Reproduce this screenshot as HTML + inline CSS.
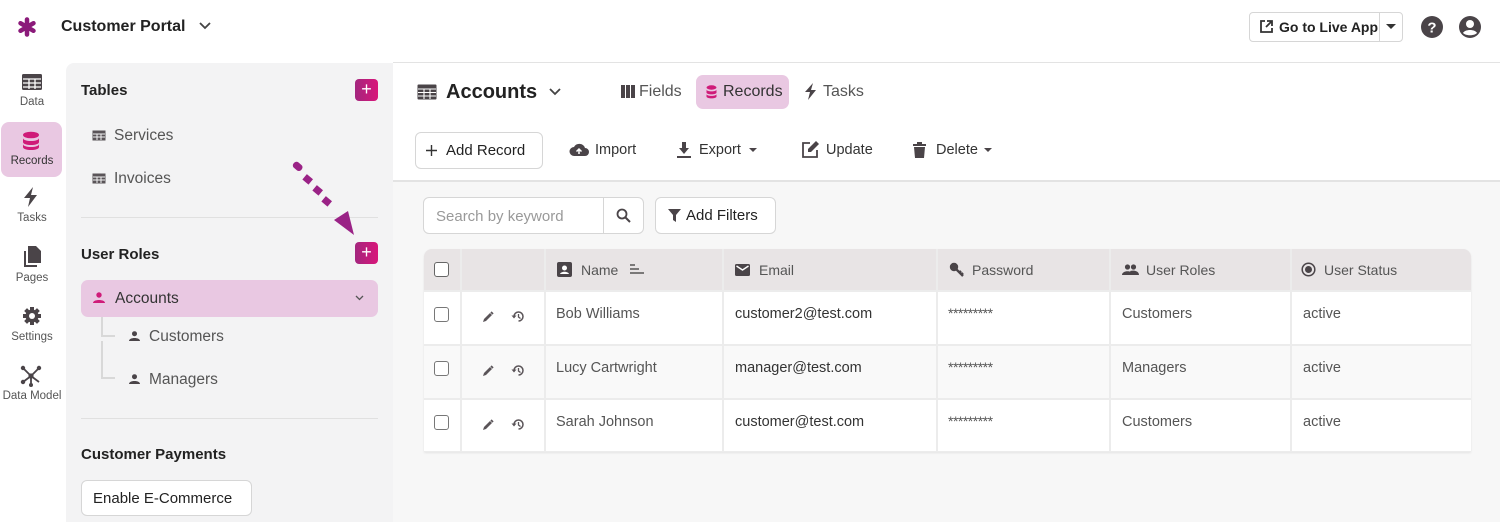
<!DOCTYPE html>
<html><head><meta charset="utf-8"><style>
*{box-sizing:border-box;margin:0;padding:0}
body{width:1500px;height:522px;overflow:hidden;background:#fff;font-family:"Liberation Sans",Arial,sans-serif;color:#333;position:relative}
.a{position:absolute}
.t{position:absolute;white-space:nowrap}
.rl{position:absolute;left:0;width:64px;text-align:center;font-size:11.5px;color:#555}
.btn{position:absolute;border:1px solid #d6d6d6;border-radius:6px;background:#fff}
.plus{position:absolute;width:23px;height:22px;border-radius:4px;background:linear-gradient(90deg,#a3267e,#d9167a);color:#fff;font-size:18px;line-height:21px;text-align:center}
.th{position:absolute;top:249px;height:41px;background:#e8e4e5;font-size:14px;color:#555;line-height:41px}
.cell{position:absolute;font-size:14.5px;color:#555}
</style></head><body>
<!-- top bar -->
<svg class="a" style="left:17px;top:17px" width="20" height="20" viewBox="0 0 20 20"><g stroke="#8b1a7a" stroke-width="4.5" stroke-linecap="round"><path d="M10 2.5v15M3.5 6.2l13 7.6M3.5 13.8l13-7.6"/></g></svg>
<div class="t" style="left:61px;top:18px;font-size:16px;font-weight:bold;color:#222">Customer Portal</div>
<svg class="a" style="left:198px;top:20px" width="14" height="12"><path d="M2 3l5 5 5-5" stroke="#444" stroke-width="1.8" fill="none"/></svg>
<div class="btn" style="left:1249px;top:12px;width:154px;height:30px;border-radius:4px"></div>
<div class="a" style="left:1379px;top:12px;width:1px;height:30px;background:#d6d6d6"></div>
<svg class="a" style="left:1259px;top:19px" width="15" height="15"><path d="M6 2H2v11h11V9M8 2h5v5M13 2L7 8" stroke="#333" stroke-width="1.8" fill="none"/></svg>
<div class="t" style="left:1279px;top:19px;font-size:14px;font-weight:bold;color:#222">Go to Live App</div>
<svg class="a" style="left:1385px;top:23px" width="12" height="8"><path d="M1 1h10L6 6z" fill="#333"/></svg>
<svg class="a" style="left:1420px;top:15px" width="24" height="24"><circle cx="12" cy="12" r="11" fill="#4a4448"/><text x="12" y="17.5" text-anchor="middle" font-size="15" font-weight="bold" fill="#fff" font-family="Liberation Sans">?</text></svg>
<svg class="a" style="left:1458px;top:15px" width="24" height="24"><circle cx="12" cy="12" r="11" fill="#4a4448"/><circle cx="12" cy="9" r="4" fill="#fff"/><path d="M5 18c2-4 12-4 14 0c-3 3-11 3-14 0z" fill="#fff"/></svg>
<div class="a" style="left:393px;top:62px;width:1107px;height:1px;background:#e3e3e3"></div>

<!-- rail -->
<svg class="a" style="left:21px;top:73px" width="22" height="18"><rect x="1" y="1" width="20" height="16" rx="1.5" fill="#4a4448"/><path d="M2 6h18M2 10h18M2 14h18M8 6v10M14 6v10" stroke="#fff" stroke-width="1.3"/></svg>
<div class="rl" style="top:96px">Data</div>
<div class="a" style="left:1px;top:122px;width:61px;height:55px;background:#e9c8e2;border-radius:8px"></div>
<svg class="a" style="left:22px;top:131px" width="18" height="20"><ellipse cx="9" cy="4" rx="8" ry="3.3" fill="#cf1b79"/><path d="M1 7c0 4 16 4 16 0v4c0 4-16 4-16 0zM1 13c0 4 16 4 16 0v3c0 4-16 4-16 0z" fill="#cf1b79"/></svg>
<div class="rl" style="top:155px;color:#333">Records</div>
<svg class="a" style="left:23px;top:187px" width="16" height="20"><path d="M10 0L1 11h6l-2 9 9-12H8z" fill="#4a4448"/></svg>
<div class="rl" style="top:212px">Tasks</div>
<svg class="a" style="left:22px;top:246px" width="20" height="22"><path d="M6 0h8l5 5v12H6z" fill="#4a4448"/><path d="M2 5h2v14h11v2H2z" fill="#4a4448"/></svg>
<div class="rl" style="top:272px">Pages</div>
<svg class="a" style="left:22px;top:306px" width="20" height="20" viewBox="0 0 20 20"><g fill="#4a4448"><circle cx="10" cy="10" r="6.5"/><g stroke="#4a4448" stroke-width="4"><path d="M10 1v18M1 10h18M3.6 3.6l12.8 12.8M16.4 3.6L3.6 16.4"/></g></g><circle cx="10" cy="10" r="3" fill="#fff"/></svg>
<div class="rl" style="top:331px">Settings</div>
<svg class="a" style="left:20px;top:365px" width="22" height="22"><path d="M3 3l8 8 8-8M3 17l8-6M11 11v9M11 11l8 6" stroke="#4a4448" stroke-width="1.8" fill="none"/><circle cx="3" cy="3" r="2.2" fill="#4a4448"/><circle cx="19" cy="3" r="2.2" fill="#4a4448"/><circle cx="3" cy="17" r="2.2" fill="#4a4448"/><circle cx="11" cy="11" r="2.6" fill="#4a4448"/><circle cx="11" cy="20" r="2" fill="#4a4448"/></svg>
<div class="rl" style="top:390px;font-size:11.5px">Data Model</div>

<!-- sidebar -->
<div class="a" style="left:66px;top:63px;width:327px;height:459px;background:#f3f3f4;border-top-left-radius:8px"></div>
<div class="t" style="left:81px;top:82px;font-size:15px;font-weight:bold;color:#222">Tables</div>
<div class="plus" style="left:355px;top:79px">+</div>
<svg class="a" style="left:92px;top:130px" width="14" height="11"><rect x="0.5" y="0.5" width="13" height="10" fill="#5a5458"/><path d="M1 4h12M1 7h12M5 4v6M9 4v6" stroke="#f3f3f4" stroke-width="1"/></svg>
<div class="t" style="left:114px;top:127px;font-size:15.5px;color:#555">Services</div>
<svg class="a" style="left:92px;top:173px" width="14" height="11"><rect x="0.5" y="0.5" width="13" height="10" fill="#5a5458"/><path d="M1 4h12M1 7h12M5 4v6M9 4v6" stroke="#f3f3f4" stroke-width="1"/></svg>
<div class="t" style="left:114px;top:170px;font-size:15.5px;color:#555">Invoices</div>
<div class="a" style="left:81px;top:217px;width:297px;height:1px;background:#e0e0e0"></div>
<svg class="a" style="left:290px;top:160px" width="70" height="80"><g fill="#9a2286"><rect x="3" y="3" width="10" height="7" rx="3" transform="rotate(40 8 6)"/><rect x="14" y="16" width="8" height="7" transform="rotate(40 18 19)"/><rect x="24" y="27" width="8" height="7" transform="rotate(40 28 30)"/><rect x="33" y="38" width="8" height="7" transform="rotate(40 37 41)"/><path d="M44 64l20 15-6-24z" transform="translate(0,-4)"/></g></svg>
<div class="t" style="left:81px;top:246px;font-size:15px;font-weight:bold;color:#222">User Roles</div>
<div class="plus" style="left:355px;top:242px">+</div>
<div class="a" style="left:81px;top:280px;width:297px;height:37px;background:#e9c8e2;border-radius:7px"></div>
<svg class="a" style="left:93px;top:292px" width="12" height="11"><circle cx="6" cy="3" r="2.7" fill="#cf1b79"/><path d="M0 11c0-4 12-4 12 0z" fill="#cf1b79"/></svg>
<div class="t" style="left:115px;top:290px;font-size:15.5px;color:#333">Accounts</div>
<svg class="a" style="left:355px;top:295px" width="9" height="6"><path d="M1 1l3.5 3.5L8 1" stroke="#555" stroke-width="1.3" fill="none"/></svg>
<div class="a" style="left:101px;top:317px;width:2px;height:20px;background:#d8d8d8"></div>
<div class="a" style="left:101px;top:335px;width:14px;height:2px;background:#d8d8d8"></div>
<div class="a" style="left:101px;top:341px;width:2px;height:38px;background:#d8d8d8"></div>
<div class="a" style="left:101px;top:377px;width:14px;height:2px;background:#d8d8d8"></div>
<svg class="a" style="left:129px;top:331px" width="11" height="10"><circle cx="5.5" cy="2.7" r="2.5" fill="#4a4448"/><path d="M0 10c0-4 11-4 11 0z" fill="#4a4448"/></svg>
<div class="t" style="left:149px;top:328px;font-size:15.5px;color:#555">Customers</div>
<svg class="a" style="left:129px;top:374px" width="11" height="10"><circle cx="5.5" cy="2.7" r="2.5" fill="#4a4448"/><path d="M0 10c0-4 11-4 11 0z" fill="#4a4448"/></svg>
<div class="t" style="left:149px;top:371px;font-size:15.5px;color:#555">Managers</div>
<div class="a" style="left:81px;top:418px;width:297px;height:1px;background:#e0e0e0"></div>
<div class="t" style="left:81px;top:446px;font-size:15px;font-weight:bold;color:#222">Customer Payments</div>
<div class="btn" style="left:81px;top:480px;width:171px;height:36px"></div>
<div class="t" style="left:93px;top:490px;font-size:15px;color:#222">Enable E-Commerce</div>

<!-- main header -->
<svg class="a" style="left:417px;top:84px" width="20" height="16"><rect x="0.5" y="0.5" width="19" height="15" rx="1" fill="#4a4448"/><path d="M1 5h18M1 8.5h18M1 12h18M7 5v10M13 5v10" stroke="#fff" stroke-width="1.1"/></svg>
<div class="t" style="left:446px;top:81px;font-size:20px;font-weight:bold;color:#222">Accounts</div>
<svg class="a" style="left:548px;top:87px" width="14" height="10"><path d="M2 2l5 5 5-5" stroke="#444" stroke-width="1.8" fill="none"/></svg>
<svg class="a" style="left:621px;top:85px" width="14" height="13"><rect x="0" y="0" width="4" height="13" fill="#4a4448"/><rect x="5" y="0" width="4" height="13" fill="#4a4448"/><rect x="10" y="0" width="4" height="13" fill="#4a4448"/></svg>
<div class="t" style="left:639px;top:83px;font-size:16px;color:#555">Fields</div>
<div class="a" style="left:696px;top:75px;width:93px;height:34px;background:#e9c8e2;border-radius:7px"></div>
<svg class="a" style="left:706px;top:85px" width="11" height="14"><ellipse cx="5.5" cy="2.5" rx="5" ry="2.2" fill="#cf1b79"/><path d="M.5 4.5c0 2.5 10 2.5 10 0v3c0 2.5-10 2.5-10 0zM.5 9c0 2.5 10 2.5 10 0v2.5c0 2.5-10 2.5-10 0z" fill="#cf1b79"/></svg>
<div class="t" style="left:723px;top:83px;font-size:16px;color:#333">Records</div>
<svg class="a" style="left:804px;top:83px" width="14" height="17"><path d="M9 0L1 9h5l-2 8 8-10H7z" fill="#4a4448"/></svg>
<div class="t" style="left:823px;top:83px;font-size:16px;color:#555">Tasks</div>

<div class="btn" style="left:415px;top:132px;width:128px;height:37px"></div>
<svg class="a" style="left:426px;top:145px" width="11" height="11"><path d="M5.5 0v11M0 5.5h11" stroke="#333" stroke-width="1.4"/></svg>
<div class="t" style="left:446px;top:142px;font-size:15px;color:#222">Add Record</div>
<svg class="a" style="left:569px;top:142px" width="20" height="15"><path d="M5 14h11a4 4 0 000-8 6 6 0 00-11-1A4.5 4.5 0 005 14z" fill="#4a4448"/><path d="M10 12V7M7.5 9.5L10 7l2.5 2.5" stroke="#fff" stroke-width="1.5" fill="none"/></svg>
<div class="t" style="left:595px;top:142px;font-size:14.5px;color:#333">Import</div>
<svg class="a" style="left:677px;top:142px" width="14" height="16"><path d="M5 0h4v6h3l-5 6-5-6h3z" fill="#4a4448"/><rect x="0" y="14" width="14" height="2" fill="#4a4448"/></svg>
<div class="t" style="left:699px;top:142px;font-size:14.5px;color:#333">Export</div>
<svg class="a" style="left:748px;top:147px" width="10" height="6"><path d="M1 1h8L5 5z" fill="#4a4448"/></svg>
<svg class="a" style="left:801px;top:140px" width="19" height="19"><path d="M9 3H2v14h14V10" stroke="#4a4448" stroke-width="1.8" fill="none"/><path d="M15 1l3 3-8 8H7V9z" fill="#4a4448"/></svg>
<div class="t" style="left:826px;top:142px;font-size:14.5px;color:#333">Update</div>
<svg class="a" style="left:913px;top:142px" width="13" height="16"><rect x="0" y="2" width="13" height="2" fill="#4a4448"/><rect x="4" y="0" width="5" height="2" fill="#4a4448"/><path d="M1 5h11l-1 11H2z" fill="#4a4448"/></svg>
<div class="t" style="left:936px;top:142px;font-size:14.5px;color:#333">Delete</div>
<svg class="a" style="left:983px;top:147px" width="10" height="6"><path d="M1 1h8L5 5z" fill="#4a4448"/></svg>

<!-- content area -->
<div class="a" style="left:393px;top:180px;width:1107px;height:342px;background:#f7f7f7;border-top:2px solid #e3e3e3"></div>
<div class="btn" style="left:423px;top:197px;width:221px;height:37px"></div>
<div class="a" style="left:603px;top:197px;width:1px;height:37px;background:#d6d6d6"></div>
<div class="t" style="left:436px;top:208px;font-size:15px;color:#999">Search by keyword</div>
<svg class="a" style="left:616px;top:208px" width="15" height="15"><circle cx="6" cy="6" r="4.5" stroke="#4a4448" stroke-width="1.8" fill="none"/><path d="M9.5 9.5L14 14" stroke="#4a4448" stroke-width="2"/></svg>
<div class="btn" style="left:655px;top:197px;width:121px;height:37px"></div>
<svg class="a" style="left:668px;top:209px" width="13" height="13"><path d="M0 0h13L8 6v7L5 11V6z" fill="#4a4448"/></svg>
<div class="t" style="left:686px;top:207px;font-size:15px;color:#222">Add Filters</div>

<!-- table -->
<div class="a" style="left:424px;top:249px;width:1047px;height:203px;background:#ececec;border-radius:8px 8px 0 0;box-shadow:0 1px 2px rgba(0,0,0,.08)"></div>
<div class="th" style="left:424px;width:36px;border-top-left-radius:8px"></div>
<div class="th" style="left:462px;width:82px"></div>
<div class="th" style="left:546px;width:176px"></div>
<div class="th" style="left:724px;width:212px"></div>
<div class="th" style="left:938px;width:171px"></div>
<div class="th" style="left:1111px;width:179px"></div>
<div class="th" style="left:1292px;width:179px;border-top-right-radius:8px"></div>
<div class="a" style="left:434px;top:262px;width:15px;height:15px;border:1.5px solid #666;border-radius:3px;background:#fff"></div>
<svg class="a" style="left:557px;top:262px" width="15" height="15"><rect width="15" height="15" rx="2" fill="#4a4448"/><circle cx="7.5" cy="6" r="2.5" fill="#fff"/><path d="M3 12c1-3 8-3 9 0z" fill="#fff"/></svg>
<div class="t" style="left:581px;top:262px;font-size:14px;color:#555">Name</div>
<svg class="a" style="left:630px;top:263px" width="14" height="12"><path d="M0 2h5M0 6h9M0 10h14" stroke="#555" stroke-width="1.5"/></svg>
<svg class="a" style="left:735px;top:264px" width="15" height="12"><rect width="15" height="12" rx="1.5" fill="#4a4448"/><path d="M1.5 2l6 4 6-4" stroke="#fff" stroke-width="1.4" fill="none"/></svg>
<div class="t" style="left:759px;top:262px;font-size:14px;color:#555">Email</div>
<svg class="a" style="left:949px;top:262px" width="15" height="15"><circle cx="5" cy="5" r="4.2" fill="#4a4448"/><path d="M7 7l7 7M10 11l2-2M12 13l2-2" stroke="#4a4448" stroke-width="2.3"/></svg>
<div class="t" style="left:972px;top:262px;font-size:14px;color:#555">Password</div>
<svg class="a" style="left:1122px;top:264px" width="17" height="11"><circle cx="5.5" cy="3" r="2.6" fill="#4a4448"/><circle cx="11.5" cy="3" r="2.6" fill="#4a4448"/><path d="M0 11c0-5 11-5 11 0zM9 11c0-2 0-3-1-4 4-1 9 0 9 4z" fill="#4a4448"/></svg>
<div class="t" style="left:1146px;top:262px;font-size:14px;color:#555">User Roles</div>
<svg class="a" style="left:1301px;top:262px" width="15" height="15"><circle cx="7.5" cy="7.5" r="6.3" stroke="#4a4448" stroke-width="1.5" fill="none"/><circle cx="7.5" cy="7.5" r="3.5" fill="#4a4448"/></svg>
<div class="t" style="left:1324px;top:262px;font-size:14px;color:#555">User Status</div>

<div id="rows"></div>
<script>
var rows=[["Bob Williams","customer2@test.com","Customers","#fff"],["Lucy Cartwright","manager@test.com","Managers","#f9f9f9"],["Sarah Johnson","customer@test.com","Customers","#fff"]];
var cols=[[424,36],[462,82],[546,176],[724,212],[938,171],[1111,179],[1292,179]];
var h="";
rows.forEach(function(r,i){var top=292+i*54,hh=i==2?51:52;
cols.forEach(function(c){h+='<div class="a" style="left:'+c[0]+'px;top:'+top+'px;width:'+c[1]+'px;height:'+hh+'px;background:'+r[3]+'"></div>';});
var ty=top+14;
h+='<div class="a" style="left:434px;top:'+(top+15)+'px;width:15px;height:15px;border:1.5px solid #777;border-radius:3px;background:#fff"></div>';
h+='<svg class="a" style="left:482px;top:'+(top+19)+'px" width="12" height="12"><path d="M1 11l1-3 6-6 2 2-6 6z" fill="#5a5458"/><path d="M9 1l2 2" stroke="#5a5458" stroke-width="1.8"/></svg>';
h+='<svg class="a" style="left:511px;top:'+(top+18)+'px" width="14" height="13"><path d="M3 6.5a4.5 4.5 0 114.5 4.5" stroke="#5a5458" stroke-width="1.5" fill="none"/><path d="M0.5 5.5h5L3 8.5z" fill="#5a5458"/><path d="M7.5 4v3l2 1.5" stroke="#5a5458" stroke-width="1.3" fill="none"/></svg>';
h+='<div class="t cell" style="left:556px;top:'+ty+'px">'+r[0]+'</div>';
h+='<div class="t cell" style="left:735px;top:'+ty+'px;color:#333">'+r[1]+'</div>';
h+='<div class="t cell" style="left:948px;top:'+(ty-1)+'px;font-size:14px;letter-spacing:-0.5px">*********</div>';
h+='<div class="t cell" style="left:1122px;top:'+ty+'px">'+r[2]+'</div>';
h+='<div class="t cell" style="left:1303px;top:'+ty+'px">active</div>';
});
document.getElementById("rows").innerHTML=h;
</script>
</body></html>
